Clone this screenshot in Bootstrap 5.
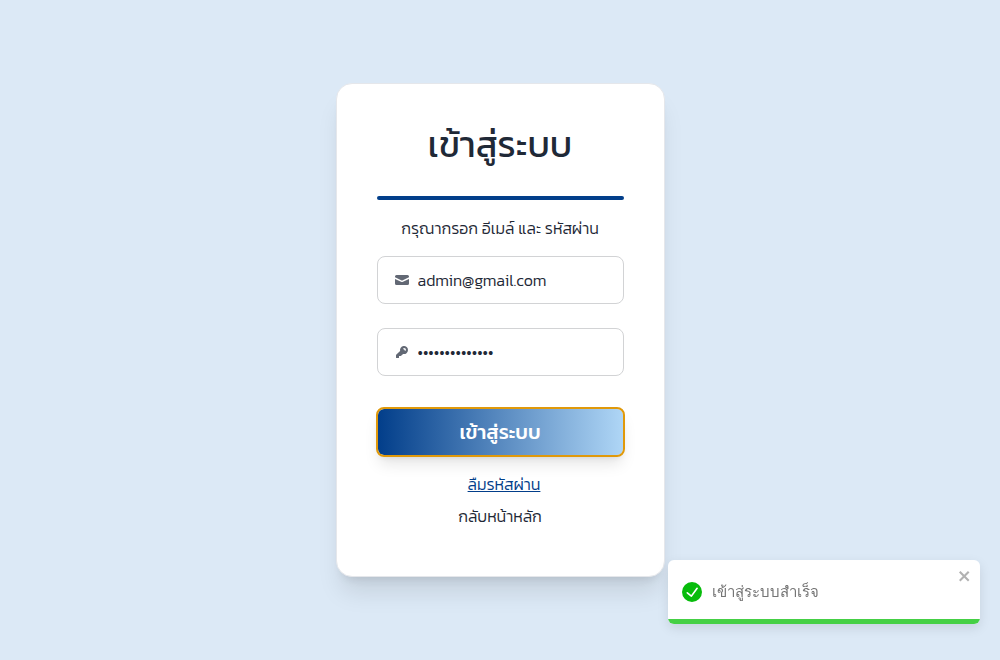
<!DOCTYPE html>
<html lang="th">
<head>
<meta charset="utf-8">
<meta name="viewport" content="width=device-width, initial-scale=1">
<title>เข้าสู่ระบบ</title>
<link href="https://cdn.jsdelivr.net/npm/bootstrap@5.3.0/dist/css/bootstrap.min.css" rel="stylesheet">
<style>
body { background: #dce9f6; color: #1f2937; font-family: Kanit, "Noto Sans Thai", "Open Sans", "Noto Sans", sans-serif; font-weight: 300; }
.login-card { width: 100%; max-width: 329px; padding: 40px 40px 48px; border: 1px solid #e5e7eb; border-radius: 16px; box-shadow: 0 20px 25px -5px rgba(0,0,0,.1), 0 8px 10px -6px rgba(0,0,0,.1); }
.login-title { font-size: 36px; line-height: 40px; font-weight: 400; }
.title-rule { height: 4px; border: 0; border-radius: 4px; background: #023e8a; opacity: 1; margin: 32px 0 16px; }
.line { font-size: 16px; line-height: 24px; }
.field { height: 48px; padding: 0 16px; border: 1px solid #d2d3d5; border-radius: 8px; }
.field:focus-within { border-color: #023e8a; }
.field svg { color: #626874; flex: none; }
.field input { min-width: 0; border: 0; outline: 0; background: none; color: #1f2937; font-size: 16px; line-height: 24px; font-weight: 300; }
.btn-login { height: 50px; margin: -1px; padding: 0; border: 2px solid #e0990a; border-radius: 8px; background: linear-gradient(90deg, #023e8a, #afd6f6) padding-box; color: #fff; font-size: 20px; line-height: 28px; font-weight: 500; box-shadow: 0 10px 15px -3px rgba(0,0,0,.1), 0 4px 6px -4px rgba(0,0,0,.1); }
.link-forgot { color: #023e8a; }
.link-home { color: #1f2937; }
.notice-area { padding: 0 20px 36px 0; }
.notice { width: 312px; height: 64px; padding: 0 14px; gap: 10px; border-radius: 6px; background: #fff; color: #757575; box-shadow: 0 4px 12px rgba(0,0,0,.1); overflow: hidden; font-family: sans-serif; font-weight: 400; }
.notice-text { font-size: 15px; line-height: 24px; }
.notice-progress { height: 5px; background: #45d045; }
.notice-close { top: 8px; right: 8px; color: #b2b2b2; line-height: 0; }
</style>
</head>
<body>
<main class="min-vh-100 d-flex align-items-center justify-content-center">
  <form class="login-card bg-white text-center">
    <h1 class="login-title mb-0">เข้าสู่ระบบ</h1>
    <hr class="title-rule">
    <p class="line mb-3">กรุณากรอก อีเมล์ และ รหัสผ่าน</p>
    <label class="field d-flex align-items-center gap-2 mb-4">
      <svg width="16" height="16" viewBox="0 0 16 16" fill="currentColor" aria-hidden="true"><path d="M2.500 3A1.500 1.500 0 0 0 1 4.500v.793q.039.011.076.030L7.674 8.510a.75.75 0 0 0 .652 0l6.598-3.187A.8.800 0 0 1 15 5.293V4.500A1.500 1.500 0 0 0 13.500 3z"/><path d="M15 6.954 8.978 9.860a2.250 2.250 0 0 1-1.956 0L1 6.954V11.500A1.500 1.500 0 0 0 2.500 13h11a1.500 1.500 0 0 0 1.500-1.500z"/></svg>
      <input class="flex-grow-1 p-0" type="email" value="admin@gmail.com" aria-label="อีเมล์">
    </label>
    <label class="field d-flex align-items-center gap-2 mb-4">
      <svg width="16" height="16" viewBox="0 0 16 16" fill="currentColor" aria-hidden="true"><path fill-rule="evenodd" d="M14 6a4 4 0 0 1-4.899 3.899l-1.955 1.955a.5.5 0 0 1-.353.146H5v1.500a.5.5 0 0 1-.5.5h-2a.5.5 0 0 1-.5-.5v-2.293a.5.5 0 0 1 .146-.353l3.955-3.955A4 4 0 1 1 14 6m-4-2a.75.75 0 0 0 0 1.500.5.5 0 0 1 .5.500.75.75 0 0 0 1.500 0 2 2 0 0 0-2-2"/></svg>
      <input class="flex-grow-1 p-0" type="password" value="admin123456789" aria-label="รหัสผ่าน">
    </label>
    <div class="d-grid pt-2 mb-3"><button type="button" class="btn btn-login">เข้าสู่ระบบ</button></div>
    <div class="line ps-2 mb-2"><a class="link-forgot" href="#">ลืมรหัสผ่าน</a></div>
    <div class="line"><a class="link-home text-decoration-none" href="#">กลับหน้าหลัก</a></div>
  </form>
</main>
<div class="notice-area position-fixed bottom-0 end-0">
  <div class="notice position-relative d-flex align-items-center" role="alert">
    <svg width="20" height="20" viewBox="0 0 24 24" fill="#07bc0c" aria-hidden="true"><path d="M12 0a12 12 0 1 0 12 12A12.014 12.014 0 0 0 12 0zm6.927 8.200-6.845 9.289a1.011 1.011 0 0 1-1.430.188l-4.888-3.908a1 1 0 1 1 1.250-1.562l4.076 3.261 6.227-8.451a1 1 0 1 1 1.610 1.183z"/></svg>
    <span class="notice-text">เข้าสู่ระบบสำเร็จ</span>
    <div class="notice-progress position-absolute bottom-0 start-0 w-100"></div>
    <button type="button" class="notice-close position-absolute border-0 bg-transparent p-0" aria-label="ปิด"><svg width="14" height="16" viewBox="0 0 14 16" fill="currentColor" aria-hidden="true"><path fill-rule="evenodd" d="M7.710 8.230l3.750 3.750-1.480 1.480-3.750-3.750-3.750 3.750L1 11.980l3.750-3.750L1 4.480 2.480 3l3.750 3.750L9.980 3l1.480 1.480-3.750 3.750z"/></svg></button>
  </div>
</div>
<script src="https://cdn.jsdelivr.net/npm/bootstrap@5.3.0/dist/js/bootstrap.bundle.min.js"></script>
</body>
</html>
